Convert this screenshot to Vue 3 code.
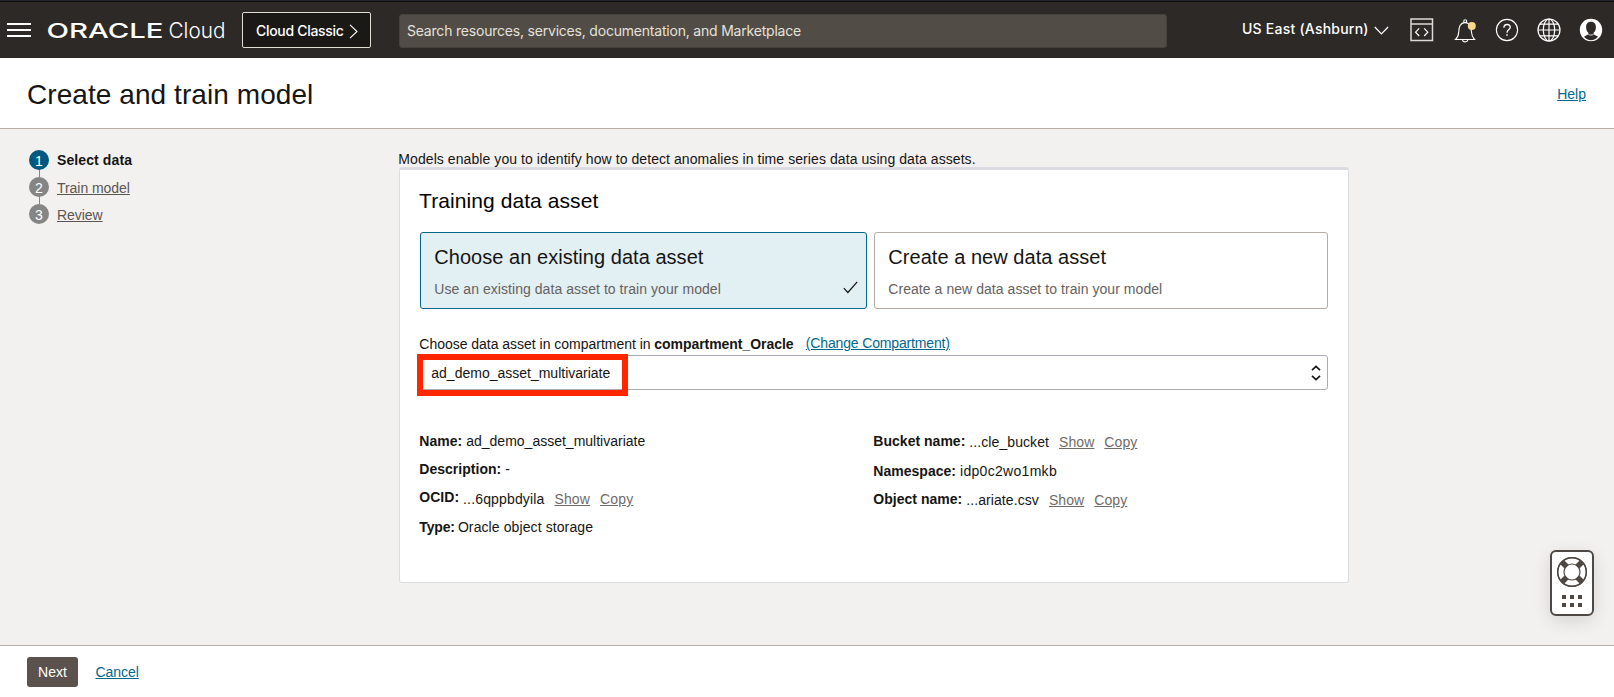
<script setup>
const steps = [
  { label: 'Select data', active: true },
  { label: 'Train model' },
  { label: 'Review' },
]
const choices = [
  { title: 'Choose an existing data asset', text: 'Use an existing data asset to train your model', selected: true },
  { title: 'Create a new data asset', text: 'Create a new data asset to train your model' },
]
const left = [
  { label: 'Name:', value: 'ad_demo_asset_multivariate' },
  { label: 'Description:', value: '-' },
  { label: 'OCID:', value: '...6qppbdyila', actions: true, cls: 'ocid' },
  { label: 'Type:', value: 'Oracle object storage', cls: 'type' },
]
const right = [
  { label: 'Bucket name:', value: '...cle_bucket', actions: true, cls: 'bucket' },
  { label: 'Namespace:', value: 'idp0c2wo1mkb', cls: 'namespace' },
  { label: 'Object name:', value: '...ariate.csv', actions: true, cls: 'object' },
]
</script>

<template>
  <div class="page">
    <header class="topbar">
      <svg class="menu" width="24" height="14" viewBox="0 0 24 14"><path d="M0 1h24M0 7h24M0 13h24" stroke="#fff" stroke-width="2" /></svg>
      <svg class="logo" width="178" height="24" viewBox="0 0 178 24">
        <text class="oracle" x="-1.5" y="19" textLength="117" lengthAdjust="spacingAndGlyphs">ORACLE</text>
        <text class="cloud" x="120.5" y="19" textLength="57" lengthAdjust="spacingAndGlyphs">Cloud</text>
      </svg>
      <button class="classic">
        <span>Cloud Classic</span>
        <svg width="9" height="15" viewBox="0 0 9 15"><path d="M1 .8 8 7.5 1 14.2" fill="none" stroke="#fff" stroke-width="1.1" /></svg>
      </button>
      <div class="search">Search resources, services, documentation, and Marketplace</div>
      <div class="region">
        <span>US East (Ashburn)</span>
        <svg width="15" height="9" viewBox="0 0 15 9"><path d="M.8 1 7.4 7.8 14.1 1" fill="none" stroke="#fff" stroke-width="1.2" /></svg>
      </div>
      <svg class="ic code" width="24" height="24" viewBox="0 0 24 24" fill="none" stroke="#dcdad8" stroke-width="1.5">
        <path d="M1 1h21.5v21.5H1zM1 6h21.5" /><path d="m9.200 10.400-3.600 3.800 3.600 3.800M14.200 10.400l3.600 3.800-3.600 3.800" stroke="#fff" stroke-width="1.2" />
      </svg>
      <svg class="ic bell" width="24" height="24" viewBox="0 0 24 24" fill="none" stroke="#fff" stroke-width="1.1">
        <path d="M1.5 20.5h19c-2-2-2.8-3.6-3-7.2-.2-5.5-1.2-9.2-6.3-9.9-5.3.7-6.3 4.4-6.5 9.900-.2 3.600-1 5.200-3.200 7.200z" />
        <circle cx="11.2" cy="2.2" r="1.5" /><path d="M8.5 20.8c.2 2.7 5 2.7 5.3 0" />
        <circle cx="17.8" cy="7" r="4" fill="#f8d88b" stroke="none" />
      </svg>
      <svg class="ic help-ic" width="24" height="24" viewBox="0 0 24 24" fill="none" stroke="#fff" stroke-width="1.1">
        <circle cx="12" cy="12" r="10.6" />
        <path d="M8.9 9.700c0-4.200 6.400-4.200 6.400-.5 0 2.300-3.300 2.300-3.300 5.500" stroke-width="1.3" /><path d="M12 16.3v1.5" stroke-width="1.5" />
      </svg>
      <svg class="ic globe" width="24" height="24" viewBox="0 0 24 24" fill="none" stroke="#fff" stroke-width="1.2">
        <circle cx="12" cy="12" r="11" /><ellipse cx="12" cy="12" rx="5.7" ry="11" />
        <path d="M12 1v22M1 12h22M2.800 6.200h18.400M2.800 17.800h18.400" />
      </svg>
      <svg class="ic user" width="24" height="24" viewBox="0 0 24 24">
        <circle cx="12" cy="12" r="11.2" fill="#fff" />
        <path d="M12 3.8c-3.300 0-4.900 2.200-4.900 5.400 0 2.400.8 4.400 2.300 5.600v1.500L5 18.700c3.500 4.600 10.500 4.600 14 0l-4.400-2.400v-1.500c1.500-1.200 2.300-3.200 2.300-5.600 0-3.200-1.600-5.400-4.900-5.400z" fill="#2d2926" />
        <path d="M9.400 16.300c1.600 1 3.600 1 5.200 0" fill="none" stroke="#fff" stroke-width=".8" />
      </svg>
    </header>

    <div class="titlebar">
      <h1>Create and train model</h1>
      <a class="link">Help</a>
    </div>

    <main class="body">
      <ol class="steps">
        <li v-for="(s, i) in steps" :key="s.label" :class="{ active: s.active }">
          <span class="num">{{ i + 1 }}</span><span class="step-label">{{ s.label }}</span>
        </li>
      </ol>

      <section class="content">
        <p class="intro">Models enable you to identify how to detect anomalies in time series data using data assets.</p>
        <div class="card">
          <h2>Training data asset</h2>
          <div class="choices">
            <div v-for="c in choices" :key="c.title" class="choice" :class="{ selected: c.selected }">
              <h3>{{ c.title }}</h3>
              <p>{{ c.text }}</p>
              <svg v-if="c.selected" class="check" width="15" height="13" viewBox="0 0 15 13"><path d="M.8 7.200 4.900 11.500 14.200.8" fill="none" stroke="#161513" stroke-width="1.2" /></svg>
            </div>
          </div>
          <div class="compartment">
            <span class="lead">Choose data asset in compartment in</span>
            <b>compartment_Oracle</b>
            <a class="link">(Change Compartment)</a>
          </div>
          <div class="select">
            <span>ad_demo_asset_multivariate</span>
            <svg width="10" height="16" viewBox="0 0 10 16"><path d="M1 5.200 5 1.500l4 3.700M1 10.800l4 3.700 4-3.700" fill="none" stroke="#161513" stroke-width="1.7" /></svg>
            <div class="highlight"></div>
          </div>
          <div class="details">
            <div v-for="(col, n) in [left, right]" :key="n" class="col">
              <div v-for="d in col" :key="d.label" class="row" :class="d.cls">
                <b>{{ d.label }}</b>
                <span class="value">{{ d.value }}</span>
                <template v-if="d.actions"><a class="show">Show</a><a class="copy">Copy</a></template>
              </div>
            </div>
          </div>
        </div>
      </section>
    </main>

    <footer class="footer">
      <button class="next">Next</button>
      <a class="link cancel">Cancel</a>
    </footer>

    <div class="support">
      <svg width="40" height="62" viewBox="0 0 40 62">
        <circle cx="20" cy="20" r="11.2" fill="none" stroke="#4e4944" stroke-width="7.5" />
        <circle cx="20" cy="20" r="11.2" fill="none" stroke="#fff" stroke-width="5.2" />
        <path d="m9.700 9.700 5 5M30.300 9.700l-5 5M9.700 30.300l5-5M30.300 30.300l-5-5" stroke="#4e4944" stroke-width="5.5" />
        <circle cx="20" cy="20" r="14.3" fill="none" stroke="#4e4944" stroke-width="1.5" />
        <path d="M10 43h4v4h-4zM18 43h4v4h-4zM26 43h4v4h-4zM10 51h4v4h-4zM18 51h4v4h-4zM26 51h4v4h-4z" fill="#4e4944" />
      </svg>
    </div>
  </div>
</template>

<style>
body { margin: 0; overflow: hidden; }
</style>
<style scoped>
* { box-sizing: border-box; }
h1, h2, h3, p, ol { margin: 0; padding: 0; font-weight: 400; }
.page { position: relative; width: 1614px; height: 697px; display: flex; flex-direction: column; background: #f3f1f0; color: #161513; font: 14px/20px "Liberation Sans", Arial, sans-serif; white-space: nowrap; }
.topbar { height: 58px; flex: none; display: flex; align-items: flex-start; background: #2d2926; border-top: 1px solid #23232f; box-shadow: inset 0 1px #0e0d10; color: #fff; font-family: Inter, sans-serif; font-weight: 500; }
.menu { margin: 22px 0 0 7px; }
.logo { margin: 18px 0 0 17px; overflow: visible; fill: #fff; font-family: Inter, sans-serif; }
.oracle { font-size: 20.5px; font-weight: 500; }
.cloud { font-size: 21.5px; font-weight: 300; }
.classic { display: flex; align-items: center; width: 129px; height: 36px; margin: 11px 0 0 16px; padding: 0 0 0 13px; border: 1px solid #e0ddd2; border-radius: 2px; background: #1b1916; color: #fff; font: 500 14px/20px Inter, sans-serif; letter-spacing: -.3px; }
.classic span { width: 93px; padding-top: 2px; text-align: left; }
.classic svg { margin-top: 2px; }
.search { width: 768px; height: 34px; margin: 13px 0 0 28px; padding: 0 7px; border: 1px solid #45413b; border-radius: 3px; background: #514c45; color: #e4e1dc; font-weight: 400; line-height: 31px; letter-spacing: -.204px; }
.region { display: flex; align-items: flex-start; margin: 18px 0 0 75px; letter-spacing: .23px; }
.region span { width: 132px; }
.region svg { margin-top: 7px; }
.ic { margin-top: 17px; flex: none; }
.code { margin-left: 21px; }
.bell { margin: 18px 0 0 20px; }
.help-ic { margin-left: 17px; }
.globe { margin: 17px 0 0 18px; }
.user { margin-left: 18px; }
.titlebar { height: 71px; flex: none; display: flex; align-items: flex-start; justify-content: space-between; padding: 0 28px 0 27px; background: #fff; border-bottom: 1px solid #b9aea5; }
h1 { margin-top: 20px; font-size: 28px; line-height: 34px; letter-spacing: .07px; }
.titlebar .link { margin-top: 26px; }
.link { color: #00688c; text-decoration: underline; }
.body { flex: 1; display: flex; }
.steps { width: 399px; padding: 21px 0 0 29px; list-style: none; color: #5b5652; }
.steps li { position: relative; display: flex; height: 27px; }
.steps li + li::before { content: ""; position: absolute; left: 10px; top: -7px; width: 1px; height: 7px; background: #858585; }
.num { width: 20px; height: 20px; border-radius: 50%; background: #858585; color: #fff; text-align: center; line-height: 22px; }
.step-label { margin: 1px 0 0 8px; text-decoration: underline; letter-spacing: -.05px; }
.active .num { background: #00597e; }
.active .step-label { margin-top: 0; color: #161513; font-weight: 700; text-decoration: none; letter-spacing: .1px; }
.content { width: 950px; padding-top: 20px; }
.intro { height: 18px; margin-left: -.7px; letter-spacing: .075px; }
.card { height: 416px; padding: 0 20px; background: #fff; border: 1px solid #dcdde0; border-top: 3px solid #dddce2; border-radius: 3px; }
h2 { margin: 18px 0 0 -1px; font-size: 21px; line-height: 26px; letter-spacing: .08px; color: #000; }
.choices { display: grid; grid-template-columns: 447px 454px; gap: 7px; margin-top: 18px; }
.choice { position: relative; height: 77px; padding: 12px 13.3px; border: 1px solid #b3aba5; border-radius: 3px; }
.choice.selected { background: #e2eff3; border-color: #00688c; }
h3 { font-size: 20px; line-height: 24px; letter-spacing: .04px; }
.choice p { margin-top: 10px; color: #67625e; letter-spacing: .055px; }
.check { position: absolute; right: 8px; bottom: 14px; }
.compartment { display: flex; height: 20px; margin: 25px 0 0 -.7px; }
.lead { width: 235px; letter-spacing: -.02px; }
.compartment b { width: 151.500px; letter-spacing: -.05px; }
.compartment .link { margin-top: -1px; letter-spacing: -.15px; }
.select { position: relative; display: flex; justify-content: space-between; width: 908px; height: 35px; margin-top: 1px; padding: 7px 6px 0 10.3px; border: 1px solid #a9acb3; border-radius: 3px; }
.select svg { margin-top: 2px; }
.highlight { position: absolute; left: -4px; top: -2px; width: 211px; height: 42px; border: 6px solid #ff2600; }
.details { display: grid; grid-template-columns: 454px 454px; margin: 41px 0 0 -.7px; }
.row { display: flex; height: 28px; }
.row b { margin-right: 4px; letter-spacing: .02px; }
.ocid { height: 30px; }
.ocid .value, .ocid a { margin-top: 2px; }
.ocid .value, .ocid a { letter-spacing: .15px; }
.type b { margin-right: 3px; letter-spacing: -.15px; }
.type .value { letter-spacing: .1px; }
.bucket { height: 30px; }
.bucket .value, .bucket a, .object .value, .object a { margin-top: 1px; letter-spacing: .08px; }
.namespace .value { letter-spacing: .3px; }
.row a { color: #706b67; text-decoration: underline; }
.row .show { margin-left: 10px; }
.row .copy { margin-left: 10px; }
.footer { height: 52px; flex: none; display: flex; align-items: flex-start; padding: 11px 27px; background: #fff; border-top: 1px solid #b9aea5; }
.next { width: 51px; height: 30px; padding: 0; border: 0; border-radius: 3px; background: #5b524e; color: #fff; font: 14px/30px "Liberation Sans", Arial, sans-serif; }
.cancel { margin: 5px 0 0 17.5px; letter-spacing: -.05px; }
.support { position: absolute; left: 1550px; top: 550px; width: 44px; height: 66px; border: 2px solid #4e4944; border-radius: 6px; background: #fff; box-shadow: 0 5px 18px rgba(0, 0, 0, .12); }
.support svg { display: block; }
</style>
